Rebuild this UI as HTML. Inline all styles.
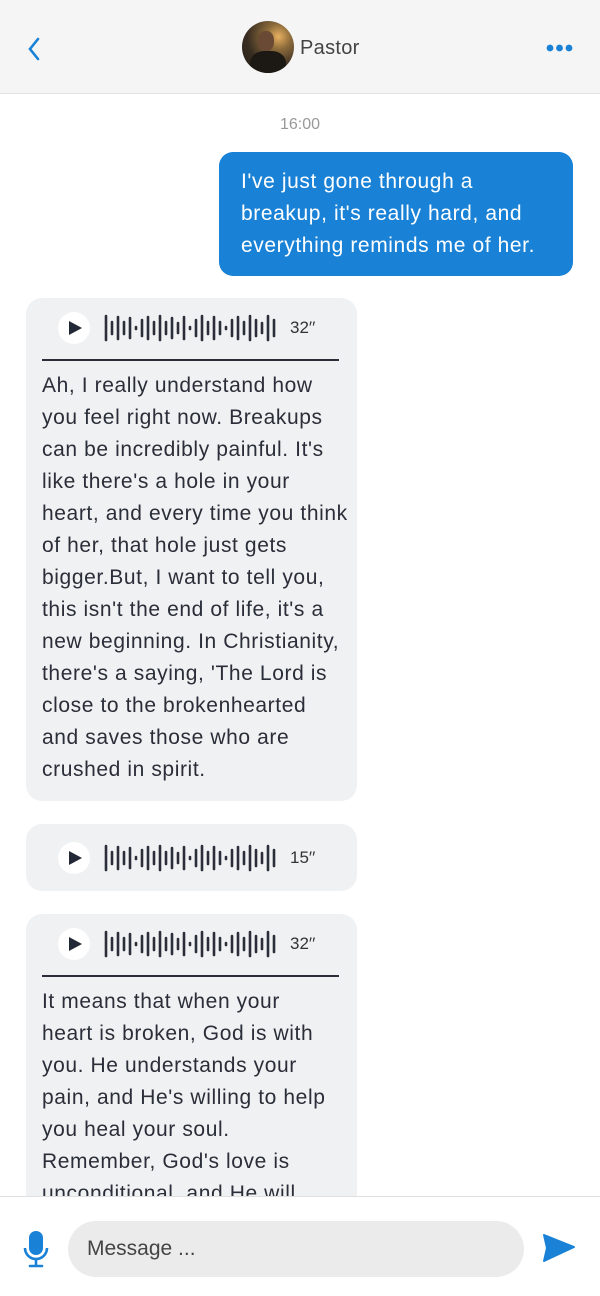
<!DOCTYPE html><html style="overflow:hidden"><head><meta charset="utf-8"><style>
*{margin:0;padding:0;box-sizing:border-box}
html,body{width:600px;height:1296px;overflow:hidden}
body{background:#fff;font-family:"Liberation Sans",sans-serif;position:relative;color:#1f2430}
.hdr{position:absolute;left:0;top:0;width:600px;height:94px;background:#f5f5f5;border-bottom:1px solid #e2e2e2}
.av{position:absolute;left:242px;top:21px;width:52px;height:52px;border-radius:50%;background:radial-gradient(circle at 70% 30%,#e8b060 0,#8a6a3a 25%,#3a2e22 60%,#1e1a16 100%);overflow:hidden}
.name{position:absolute;left:300px;top:37px;font-size:20px;color:#444;letter-spacing:0.3px}
.time{position:absolute;top:116px;width:600px;text-align:center;font-size:16px;color:#999}
.me{position:absolute;left:219px;top:152px;width:354px;height:124px;background:#1a82d6;border-radius:14px;color:#fff;font-size:21px;letter-spacing:0.6px;line-height:32px;padding:14px 0 0 22px;white-space:nowrap}
.b{position:absolute;left:26px;width:331px;background:#f0f1f3;border-radius:16px;overflow:hidden}
.txt{font-size:21px;letter-spacing:0.6px;line-height:32px;padding-left:16px;white-space:nowrap;color:#2a2e38}
.row{position:relative;height:60px}
.play{position:absolute;left:32px;top:14px;width:32px;height:32px;border-radius:50%;background:#fff}
.play:after{content:"";position:absolute;left:11px;top:9px;border-left:13px solid #222836;border-top:7px solid transparent;border-bottom:7px solid transparent}
.wave{position:absolute;left:78px;top:16px}
.dur{position:absolute;left:264px;top:20px;font-size:17px;color:#333}
.line{position:absolute;left:16px;top:61px;width:297px;height:2px;background:#2a2e38}
.foot{position:absolute;left:0;top:1196px;width:600px;height:100px;background:#fff;border-top:1px solid #e0e0e0;z-index:5}
.inp{position:absolute;left:68px;top:24px;width:456px;height:56px;border-radius:28px;background:#ebebeb;font-size:21px;color:#444;padding:16px 0 0 19px}
</style></head><body>
<div class="hdr">
<svg style="position:absolute;left:26px;top:36px" width="16" height="26"><path d="M12 3L4 13l8 10" stroke="#1a82d6" stroke-width="2.6" fill="none" stroke-linecap="round"/></svg>
<div class="av"><div style="position:absolute;left:16px;top:10px;width:16px;height:20px;border-radius:45%;background:#6a4a34"></div><div style="position:absolute;left:8px;top:30px;width:36px;height:30px;border-radius:40% 40% 0 0;background:#1c1814"></div></div>
<div class="name">Pastor</div>
<svg style="position:absolute;left:546px;top:43px" width="28" height="10"><circle cx="4" cy="5" r="3.4" fill="#1a82d6"/><circle cx="13.5" cy="5" r="3.4" fill="#1a82d6"/><circle cx="23" cy="5" r="3.4" fill="#1a82d6"/></svg>
</div>
<div class="time">16:00</div>
<div class="me">I've just gone through a<br>breakup, it's really hard, and<br>everything reminds me of her.</div>

<svg width="0" height="0" style="position:absolute"><defs><g id="w" stroke="#2a2e38" stroke-width="2.6" stroke-linecap="round">
<line x1="2" y1="2" x2="2" y2="26"/><line x1="8" y1="8" x2="8" y2="20"/><line x1="14" y1="3" x2="14" y2="25"/><line x1="20" y1="8" x2="20" y2="20"/><line x1="26" y1="4" x2="26" y2="24"/><line x1="32" y1="13" x2="32" y2="15"/><line x1="38" y1="6" x2="38" y2="22"/><line x1="44" y1="3" x2="44" y2="25"/><line x1="50" y1="8" x2="50" y2="20"/><line x1="56" y1="2" x2="56" y2="26"/><line x1="62" y1="8" x2="62" y2="20"/><line x1="68" y1="4" x2="68" y2="24"/><line x1="74" y1="9" x2="74" y2="19"/><line x1="80" y1="3" x2="80" y2="25"/><line x1="86" y1="13" x2="86" y2="15"/><line x1="92" y1="6" x2="92" y2="22"/><line x1="98" y1="2" x2="98" y2="26"/><line x1="104" y1="8" x2="104" y2="20"/><line x1="110" y1="3" x2="110" y2="25"/><line x1="116" y1="8" x2="116" y2="20"/><line x1="122" y1="13" x2="122" y2="15"/><line x1="128" y1="6" x2="128" y2="22"/><line x1="134" y1="3" x2="134" y2="25"/><line x1="140" y1="8" x2="140" y2="20"/><line x1="146" y1="2" x2="146" y2="26"/><line x1="152" y1="6" x2="152" y2="22"/><line x1="158" y1="9" x2="158" y2="19"/><line x1="164" y1="2" x2="164" y2="26"/><line x1="170" y1="6" x2="170" y2="22"/></g></defs></svg>

<div class="b" style="top:298px;height:503px">
<div class="row"><div class="play"></div><svg class="wave" width="174" height="28"><use href="#w"/></svg><div class="dur">32′′</div></div>
<div class="line"></div>
<div class="txt" style="margin-top:12px">Ah, I really understand how<br>you feel right now. Breakups<br>can be incredibly painful. It's<br>like there's a hole in your<br>heart, and every time you think<br>of her, that hole just gets<br>bigger.But, I want to tell you,<br>this isn't the end of life, it's a<br>new beginning. In Christianity,<br>there's a saying, 'The Lord is<br>close to the brokenhearted<br>and saves those who are<br>crushed in spirit.</div>
</div>

<div class="b" style="top:824px;height:67px">
<div class="row" style="top:4px"><div class="play"></div><svg class="wave" width="174" height="28"><use href="#w"/></svg><div class="dur">15′′</div></div>
</div>

<div class="b" style="top:914px;height:300px">
<div class="row"><div class="play"></div><svg class="wave" width="174" height="28"><use href="#w"/></svg><div class="dur">32′′</div></div>
<div class="line"></div>
<div class="txt" style="margin-top:12px">It means that when your<br>heart is broken, God is with<br>you. He understands your<br>pain, and He's willing to help<br>you heal your soul.<br>Remember, God's love is<br>unconditional, and He will</div>
</div>

<div class="foot">
<svg style="position:absolute;left:22px;top:34px" width="28" height="38"><rect x="7" y="0" width="14" height="24" rx="7" fill="#1a82d6"/><path d="M3 17a11 11 0 0 0 22 0" stroke="#1a82d6" stroke-width="2.6" fill="none"/><line x1="14" y1="28" x2="14" y2="34" stroke="#1a82d6" stroke-width="2.6"/><line x1="8" y1="35" x2="20" y2="35" stroke="#1a82d6" stroke-width="2.6" stroke-linecap="round"/></svg>
<div class="inp">Message ...</div>
<svg style="position:absolute;left:542px;top:36px" width="34" height="30"><path d="M2 2L32 14L2 28L5 15Z" fill="#1a82d6" stroke="#1a82d6" stroke-width="2" stroke-linejoin="round"/></svg>
</div>
</body></html>
